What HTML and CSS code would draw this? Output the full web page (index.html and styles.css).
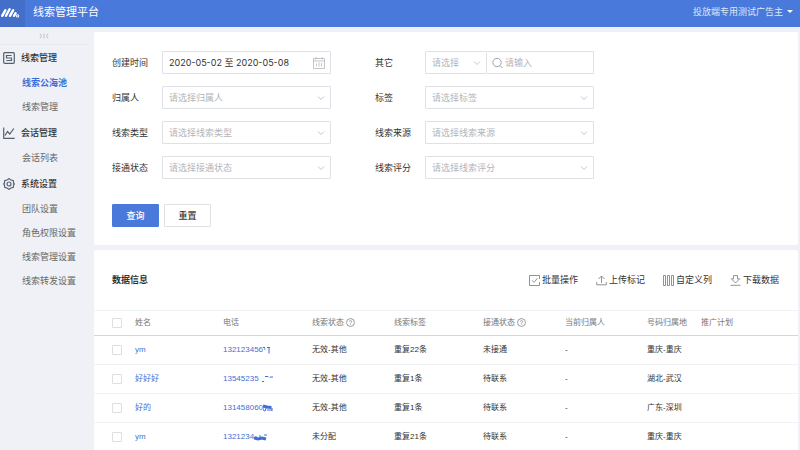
FILE: index.html
```html
<!DOCTYPE html>
<html lang="zh-CN">
<head>
  <meta charset="UTF-8" />
  <meta name="viewport" content="width=device-width, initial-scale=1.0"/>
  <title>线索管理平台</title>
  <link rel="stylesheet" href="styles.css">
</head>
<body>
  <svg class="sprite" aria-hidden="true">
    <symbol id="arrow" viewBox="0 0 8 8"><path d="M1 2.5l3 3 3-3"/></symbol>
    <symbol id="help" viewBox="0 0 10 10"><circle cx="5" cy="5" r="4.4"/><path d="M3.700 4a1.300 1.300 0 1 1 2 1.100c-.5.3-.7.5-.7 1M5 7v.7"/></symbol>
  </svg>

  <header class="header">
    <a class="logo" href="#" aria-label="首页">
      <svg width="20" height="14" viewBox="0 0 20 14"><path d="M2.200 9.800l.6-1M6 9.800L9.600 3.200M10 9.800l3.200-5.600M14 9.800l1.600-2.600"/><path d="M2.800 8.800L5.400 4.200"/><circle cx="17.600" cy="9.900" r=".5"/></svg>
    </a>
    <h1>线索管理平台</h1>
    <button class="account" type="button">投放端专用测试广告主<span class="caret"></span></button>
  </header>

  <div class="layout">
    <nav class="sidebar">
      <button class="collapse" type="button" aria-label="收起菜单">
        <svg width="10" height="6" viewBox="0 0 10 6"><path d="M1 .5L2.500 3 1 5.500M5 .5v5M9 .5L7.500 3 9 5.500"/></svg>
      </button>
      <h2>
        <svg width="12" height="12" viewBox="0 0 12 12"><rect x=".7" y=".7" width="10.600" height="10.600" rx="1"/><path d="M8.600 3.500H3.500v2.500h5v2.500H3.400"/></svg>
        线索管理
      </h2>
      <ul>
        <li><a class="active" href="#">线索公海池</a></li>
        <li><a href="#">线索管理</a></li>
      </ul>
      <h2>
        <svg width="12" height="12" viewBox="0 0 12 12"><path d="M.7.500v10.800h11M2 8.500l2.500-4 2.300 2.500 4-5.500"/></svg>
        会话管理
      </h2>
      <ul>
        <li><a href="#">会话列表</a></li>
      </ul>
      <h2>
        <svg width="12" height="12" viewBox="0 0 12 12"><path d="M6 .6l1.500 1.200 2.800.8.300 2.600.8.800-.8.800-.3 2.600-2.800.8L6 11.400l-1.500-1.200-2.800-.8-.3-2.600L.6 6l.8-.8.300-2.600 2.800-.8z"/><circle cx="6" cy="6" r="2"/></svg>
        系统设置
      </h2>
      <ul>
        <li><a href="#">团队设置</a></li>
        <li><a href="#">角色权限设置</a></li>
        <li><a href="#">线索管理设置</a></li>
        <li><a href="#">线索转发设置</a></li>
      </ul>
    </nav>

    <main class="content">
      <form class="card filter">
        <div class="fields">
          <label for="date">创建时间</label>
          <div class="control">
            <input id="date" type="text" value="2020-05-02 至 2020-05-08">
            <svg class="calendar" width="12" height="12" viewBox="0 0 12 12"><path d="M.5 1.500h11v10H.5zM.5 4h11M3 0v2.500M9 0v2.500M3.500 6.500v3M6 5.500v4M8.500 6v3.500"/></svg>
          </div>
          <label for="other">其它</label>
          <div class="group">
            <div class="control">
              <select id="other"><option>请选择</option></select>
              <svg class="arrow"><use href="#arrow"/></svg>
            </div>
            <div class="control">
              <input type="text" placeholder="请输入" aria-label="请输入">
              <svg class="magnifier" width="11" height="11" viewBox="0 0 11 11"><circle cx="5" cy="5" r="4.200"/><path d="M8 8l2.500 2.500"/></svg>
            </div>
          </div>

          <label for="owner">归属人</label>
          <div class="control">
            <select id="owner"><option>请选择归属人</option></select>
            <svg class="arrow"><use href="#arrow"/></svg>
          </div>
          <label for="tag">标签</label>
          <div class="control">
            <select id="tag"><option>请选择标签</option></select>
            <svg class="arrow"><use href="#arrow"/></svg>
          </div>

          <label for="type">线索类型</label>
          <div class="control">
            <select id="type"><option>请选择线索类型</option></select>
            <svg class="arrow"><use href="#arrow"/></svg>
          </div>
          <label for="source">线索来源</label>
          <div class="control">
            <select id="source"><option>请选择线索来源</option></select>
            <svg class="arrow"><use href="#arrow"/></svg>
          </div>

          <label for="state">接通状态</label>
          <div class="control">
            <select id="state"><option>请选择接通状态</option></select>
            <svg class="arrow"><use href="#arrow"/></svg>
          </div>
          <label for="score">线索评分</label>
          <div class="control">
            <select id="score"><option>请选择线索评分</option></select>
            <svg class="arrow"><use href="#arrow"/></svg>
          </div>
        </div>
        <div class="actions">
          <button class="btn primary" type="submit">查询</button>
          <button class="btn" type="reset">重置</button>
        </div>
      </form>

      <section class="card data">
        <div class="data-head">
          <h3>数据信息</h3>
          <div class="tools">
            <button type="button"><svg width="11" height="11" viewBox="0 0 11 11"><path d="M10.500 7v3.500H.5V.5h10V4M3 5.300l2 2 3.500-4"/></svg>批量操作</button>
            <button type="button"><svg width="11" height="11" viewBox="0 0 11 11"><path d="M5.500 8V1.200M2.500 4l3-3 3 3M.7 7v2.800h9.600V7"/></svg>上传标记</button>
            <button type="button"><svg width="11" height="11" viewBox="0 0 11 11"><path d="M.5.5h2v10h-2zM4.500.5h2v10h-2zM8.500.5h2v10h-2z"/></svg>自定义列</button>
            <button type="button"><svg width="11" height="11" viewBox="0 0 11 11"><path d="M3.500.6h4v3.200h2.200L5.500 8 1.300 3.800h2.200zM.5 10.300h10"/></svg>下载数据</button>
          </div>
        </div>
        <table>
          <colgroup>
            <col class="c-check"><col class="c-name"><col class="c-phone"><col class="c-status"><col class="c-tag"><col class="c-state"><col class="c-owner"><col class="c-area"><col>
          </colgroup>
          <thead>
            <tr>
              <th><input type="checkbox" aria-label="全选"></th>
              <th>姓名</th>
              <th>电话</th>
              <th>线索状态<svg class="help"><use href="#help"/></svg></th>
              <th>线索标签</th>
              <th>接通状态<svg class="help"><use href="#help"/></svg></th>
              <th>当前归属人</th>
              <th>号码归属地</th>
              <th>推广计划</th>
            </tr>
          </thead>
          <tbody>
            <tr>
              <td><input type="checkbox" aria-label="选择 ym"></td>
              <td><a href="#">ym</a></td>
              <td><a href="#">132123456<svg class="mask" width="8" height="8" viewBox="0 0 8 8"><path d="M0 1.500h2M1 3h1.500M4 1.500h3M6 1.500v6"/></svg></a></td>
              <td>无效-其他</td>
              <td>重复22条</td>
              <td>未接通</td>
              <td>-</td>
              <td>重庆-重庆</td>
              <td></td>
            </tr>
            <tr>
              <td><input type="checkbox" aria-label="选择 好好好"></td>
              <td><a href="#">好好好</a></td>
              <td><a href="#">13545235<svg class="mask" width="14" height="8" viewBox="0 0 14 8"><path d="M3 6.500h2M6 1.500h3l1 1M11 2h3"/></svg></a></td>
              <td>无效-其他</td>
              <td>重复1条</td>
              <td>待联系</td>
              <td>-</td>
              <td>湖北-武汉</td>
              <td></td>
            </tr>
            <tr>
              <td><input type="checkbox" aria-label="选择 好的"></td>
              <td><a href="#">好的</a></td>
              <td><a href="#">131458060<svg class="mask" width="10" height="8" viewBox="0 0 10 8"><path class="thick" d="M0 2l4 1 4 .5"/><path d="M0 3v3l2 1 1-3M4 6h3M8 2v5M9 4v3"/></svg></a></td>
              <td>无效-其他</td>
              <td>重复1条</td>
              <td>待联系</td>
              <td>-</td>
              <td>广东-深圳</td>
              <td></td>
            </tr>
            <tr>
              <td><input type="checkbox" aria-label="选择 ym"></td>
              <td><a href="#">ym</a></td>
              <td><a href="#">1321234<svg class="mask" width="14" height="8" viewBox="0 0 14 8"><path class="thick" d="M0 5l4 1 4-1 4 1"/><path d="M2 3v2M6 2v3M10 2h3"/></svg></a></td>
              <td>未分配</td>
              <td>重复21条</td>
              <td>待联系</td>
              <td>-</td>
              <td>重庆-重庆</td>
              <td></td>
            </tr>
          </tbody>
        </table>
      </section>
    </main>
  </div>
</body>
</html>
```
FILE: styles.css
```css
* {
  box-sizing: border-box;
}
body {
  margin: 0;
  height: 100vh;
  display: flex;
  flex-direction: column;
  overflow: hidden;
  background: #eff1f6;
  color: #333;
  font-family: "Inter", "Noto Sans CJK SC", sans-serif;
  font-size: 9px;
  line-height: 12px;
}
h1, h2, h3, ul {
  margin: 0;
  padding: 0;
}
a {
  color: #3f6fd6;
  text-decoration: none;
}
button, input, select {
  font: inherit;
  color: inherit;
}
button {
  padding: 0;
  border: 0;
  background: none;
  cursor: pointer;
}
svg {
  fill: none;
  stroke: currentColor;
  flex: none;
}
.sprite {
  display: none;
}

/* header */
.header {
  display: flex;
  align-items: center;
  flex: none;
  height: 27px;
  padding-right: 7px;
  background: #4a79dc;
  color: #fff;
}
.logo {
  display: flex;
  align-items: center;
  width: 25px;
  height: 100%;
  padding-bottom: 2px;
  background: #446fc9;
  color: #fff;
}
.logo svg {
  stroke-width: 2.4;
  stroke-linecap: round;
}
.header h1 {
  margin-left: 8px;
  padding-bottom: 4px;
  font-size: 11px;
  font-weight: 400;
  line-height: 16px;
}
.account {
  display: flex;
  align-items: center;
  gap: 4px;
  margin-left: auto;
  padding-bottom: 4px;
  color: #dfe8fa;
}
.caret {
  border: 3px solid transparent;
  border-top-color: #fff;
  border-bottom: 0;
}

/* sidebar */
.layout {
  display: flex;
  flex: 1;
  min-height: 0;
}
.sidebar {
  flex: none;
  width: 94px;
}
.collapse {
  display: flex;
  justify-content: center;
  align-items: center;
  width: 88px;
  height: 18px;
  border-bottom: 1px solid #e8eaef;
  color: #b5b8bf;
}
.collapse svg {
  stroke-width: 0.8;
}
.sidebar h2 {
  display: flex;
  align-items: center;
  gap: 6px;
  height: 26px;
  padding-left: 3px;
  font-size: 9px;
  font-weight: 500;
}
.sidebar h2 svg {
  color: #55606e;
  stroke-width: 1.2;
}
.sidebar ul {
  margin-bottom: 1px;
  list-style: none;
}
.sidebar li a {
  display: block;
  padding-left: 22px;
  line-height: 24px;
  color: #666;
}
.sidebar li a.active {
  color: #3f6fd6;
  font-weight: 700;
}

/* content */
.content {
  display: flex;
  flex-direction: column;
  flex: 1;
  gap: 5px;
  min-width: 0;
  padding: 5px 2px 0 0;
}
.card {
  flex: none;
  background: #fff;
  border-radius: 2px;
}
.filter {
  padding: 19px 18px 18px;
}
.fields {
  display: grid;
  grid-template-columns: 50px 1fr 94px 1fr;
  row-gap: 12px;
  align-items: center;
  max-width: 482px;
}
.fields > label:nth-child(4n + 3) {
  padding-left: 44px;
}
.control {
  position: relative;
}
.control input,
.control select {
  display: block;
  width: 100%;
  height: 23px;
  padding: 0 6px;
  border: 1px solid #dfe1e6;
  border-radius: 1px;
  background: #fff;
  appearance: none;
  outline: none;
}
.control select,
.control input::placeholder {
  color: #b3b5ba;
  opacity: 1;
}
.control svg {
  position: absolute;
  top: 50%;
  right: 6px;
  transform: translateY(-50%);
  color: #b3b5ba;
  pointer-events: none;
  stroke-width: 0.8;
}
.arrow {
  width: 8px;
  height: 8px;
}
.group {
  display: grid;
  grid-template-columns: 62px 1fr;
}
.group .control + .control input {
  border-left: 0;
  padding-left: 18px;
}
.control .magnifier {
  right: auto;
  left: 5px;
  color: #888b91;
}
.actions {
  display: flex;
  gap: 5px;
  margin-top: 25px;
}
.btn {
  width: 47px;
  height: 23px;
  border: 1px solid #dfe1e6;
  border-radius: 1px;
  background: #fff;
  font-weight: 500;
}
.btn.primary {
  border-color: #4a79dc;
  background: #4a79dc;
  color: #fff;
}

/* data */
.data-head {
  display: flex;
  justify-content: space-between;
  align-items: center;
  height: 60px;
  padding: 0 19px 0 18px;
}
.data-head h3 {
  font-size: 9px;
  font-weight: 700;
}
.tools {
  display: flex;
  gap: 18px;
}
.tools button {
  display: flex;
  align-items: center;
  gap: 2px;
}
.tools svg {
  color: #777;
  stroke-width: 0.8;
}
table {
  width: 100%;
  border-collapse: separate;
  border-spacing: 0;
  table-layout: fixed;
  font-family: "Liberation Sans", "Noto Sans CJK SC", sans-serif;
  font-size: 8px;
}
th, td {
  height: 29px;
  padding: 0;
  border-bottom: 1px solid #f0f1f3;
  text-align: left;
  white-space: nowrap;
}
th {
  height: 26px;
  border-top: 1px solid #f0f1f3;
  border-bottom-color: #d5d7da;
  color: #777;
  font-weight: 400;
}
th:first-child,
td:first-child {
  padding-left: 18px;
}
.c-check { width: 41px; }
.c-name { width: 88px; }
.c-phone { width: 89px; }
.c-status { width: 82px; }
.c-tag { width: 89px; }
.c-state { width: 82px; }
.c-owner { width: 82px; }
.c-area { width: 54px; }
table input {
  display: block;
  width: 10px;
  height: 10px;
  margin: 0;
  border: 1px solid #dcdee3;
  border-radius: 1px;
  background: #fff;
  appearance: none;
}
.help {
  width: 9px;
  height: 9px;
  margin-left: 2px;
  vertical-align: middle;
  stroke-width: 0.8;
}
.mask {
  vertical-align: middle;
}
.mask .thick {
  stroke-width: 3;
}
```
